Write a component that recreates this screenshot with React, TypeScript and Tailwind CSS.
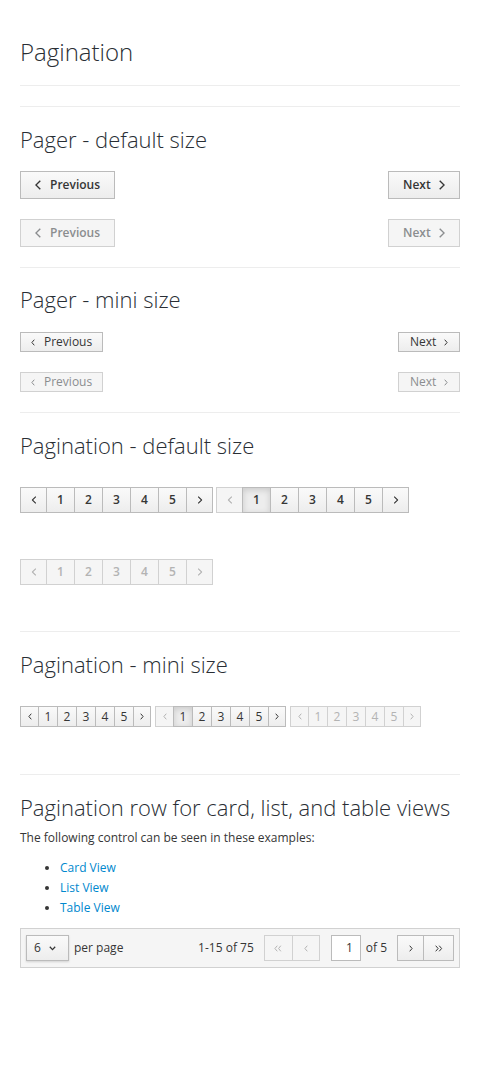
import React from 'react';

const font = { fontFamily: '"Open Sans", "Liberation Sans", sans-serif' };

function Angle({ dir, size = 'md', double = false }: { dir: 'left' | 'right' | 'down'; size?: 'sm' | 'md'; double?: boolean }) {
  const w = size === 'md' ? 6 : 4;
  const h = size === 'md' ? 10 : 7;
  if (dir === 'down') {
    return (
      <svg width="7" height="5" viewBox="0 0 7 5" fill="none" stroke="currentColor" strokeWidth="1.3">
        <path d="M0.8 0.8 L3.5 3.6 L6.2 0.8" />
      </svg>
    );
  }
  const d = dir === 'left' ? `M${w - 0.7} 0.7 L0.9 ${h / 2} L${w - 0.7} ${h - 0.7}` : `M0.7 0.7 L${w - 0.9} ${h / 2} L0.7 ${h - 0.7}`;
  if (double) {
    const d2 = dir === 'left' ? `M${w + 2.8} 0.7 L4.6 ${h / 2} L${w + 2.8} ${h - 0.7}` : `M4.2 0.7 L${w + 2.6} ${h / 2} L4.2 ${h - 0.7}`;
    return (
      <svg width={w + 4} height={h} viewBox={`0 0 ${w + 4} ${h}`} fill="none" stroke="currentColor" strokeWidth="1">
        <path d={d} />
        <path d={d2} />
      </svg>
    );
  }
  return (
    <svg width={w} height={h} viewBox={`0 0 ${w} ${h}`} fill="none" stroke="currentColor" strokeWidth={size === 'md' ? 1.4 : 1}>
      <path d={d} />
    </svg>
  );
}

const btn = 'bg-gradient-to-b from-[#fafafa] to-[#ededed] border border-[#bbb] text-[#363636]';
const btnOff = 'bg-[#f5f5f5] border border-[#d1d1d1] text-[#8b8d8f]';

function Pager({ mini, disabled }: { mini?: boolean; disabled?: boolean }) {
  const tone = disabled ? btnOff : btn;
  if (mini) {
    return (
      <div className="flex justify-between">
        <div className={`${tone} h-[20px] w-[83px] flex items-center pl-[10px] text-[12px] leading-none`}>
          <Angle dir="left" size="sm" />
          <span className="ml-[9px]">Previous</span>
        </div>
        <div className={`${tone} h-[20px] w-[62px] flex items-center pl-[11px] text-[12px] leading-none`}>
          <span>Next</span>
          <span className="ml-[8px]">
            <Angle dir="right" size="sm" />
          </span>
        </div>
      </div>
    );
  }
  return (
    <div className="flex justify-between">
      <div className={`${tone} h-[28px] w-[95px] flex items-center pl-[14px] text-[12px] font-semibold leading-none`}>
        <Angle dir="left" />
        <span className="ml-[9px]">Previous</span>
      </div>
      <div className={`${tone} h-[28px] w-[72px] flex items-center pl-[14px] text-[12px] font-semibold leading-none`}>
        <span>Next</span>
        <span className="ml-[8px]">
          <Angle dir="right" />
        </span>
      </div>
    </div>
  );
}

function Pagination({ mini, disabled, active }: { mini?: boolean; disabled?: boolean; active?: boolean }) {
  const cells = ['<', '1', '2', '3', '4', '5', '>'];
  const h = mini ? 'h-[21px]' : 'h-[26px]';
  const wFirst = mini ? 'w-[19px]' : 'w-[27px]';
  const wLast = mini ? 'w-[18px]' : 'w-[27px]';
  const wNum = mini ? 'w-[20px]' : 'w-[29px]';
  const sz = mini ? 'sm' : 'md';
  return (
    <div className={`inline-flex ${mini ? 'text-[12px]' : 'text-[12px] font-semibold'}`}>
      {cells.map((c, i) => {
        const isActive = active && c === '1';
        const off = disabled || (active && c === '<');
        let tone = off ? btnOff : btn;
        if (isActive) tone = 'bg-[#ededed] border border-[#bbb] text-[#363636] shadow-[inset_0_2px_6px_rgba(3,3,3,0.15)]';
        const w = c === '<' ? wFirst : c === '>' ? wLast : wNum;
        return (
          <div
            key={i}
            className={`${tone} ${h} ${w} ${i > 0 ? '-ml-px' : ''} ${off ? 'text-[#b3b3b3]' : ''} flex items-center justify-center leading-none`}
          >
            {c === '<' ? (
              <span className={mini ? '' : 'scale-[0.8] flex'}>
                <Angle dir="left" size={sz} />
              </span>
            ) : c === '>' ? (
              <span className={mini ? '' : 'scale-[0.8] flex'}>
                <Angle dir="right" size={sz} />
              </span>
            ) : (
              c
            )}
          </div>
        );
      })}
    </div>
  );
}

function Heading({ children, className = '' }: { children: React.ReactNode; className?: string }) {
  return <h2 className={`text-[22px] font-light leading-[32px] text-[#292e34] ${className}`}>{children}</h2>;
}

function Rule({ className = '' }: { className?: string }) {
  return <div className={`border-t border-[#ededed] ${className}`} />;
}

export default function App() {
  return (
    <div className="bg-white min-h-[1068px] px-[20px] text-[#363636]" style={font}>
      <h1 className="pt-[36px] text-[24px] font-light leading-[32px] text-[#292e34]">Pagination</h1>
      <Rule className="mt-[17px]" />
      <Rule className="mt-[20px]" />

      <Heading className="mt-[16px]">Pager - default size</Heading>
      <div className="mt-[16px]">
        <Pager />
      </div>
      <div className="mt-[20px]">
        <Pager disabled />
      </div>
      <Rule className="mt-[20px]" />

      <Heading className="mt-[15px]">Pager - mini size</Heading>
      <div className="mt-[17px]">
        <Pager mini />
      </div>
      <div className="mt-[20px]">
        <Pager mini disabled />
      </div>
      <Rule className="mt-[20px]" />

      <Heading className="mt-[16px]">Pagination - default size</Heading>
      <div className="mt-[26px] flex gap-[3px]">
        <Pagination />
        <Pagination active />
      </div>
      <div className="mt-[46px] flex">
        <Pagination disabled />
      </div>
      <Rule className="mt-[46px]" />

      <Heading className="mt-[16px]">Pagination - mini size</Heading>
      <div className="mt-[26px] flex gap-[4px]">
        <Pagination mini />
        <Pagination mini active />
        <Pagination mini disabled />
      </div>
      <Rule className="mt-[47px]" />

      <Heading className="mt-[16px]">Pagination row for card, list, and table views</Heading>
      <p className="mt-[5px] text-[12px] leading-[20px]">The following control can be seen in these examples:</p>
      <ul className="mt-[10px] pl-[40px] list-disc text-[12px] leading-[20px]">
        <li>
          <a className="text-[#0088ce]">Card View</a>
        </li>
        <li>
          <a className="text-[#0088ce]">List View</a>
        </li>
        <li>
          <a className="text-[#0088ce]">Table View</a>
        </li>
      </ul>

      <div className="mt-[10px] h-[40px] bg-[#f5f5f5] border border-[#d1d1d1] flex items-center justify-between px-[5px] text-[12px]">
        <div className="flex items-center">
          <div className={`${btn} h-[26px] w-[43px] flex items-center pl-[7px] shadow-[0_1px_2px_rgba(3,3,3,0.15)]`}>
            <span>6</span>
            <span className="ml-[8px] flex">
              <Angle dir="down" />
            </span>
          </div>
          <span className="ml-[5px]">per page</span>
        </div>
        <div className="flex items-center">
          <span>1-15 of 75</span>
          <div className="ml-[10px] flex">
            <div className={`${btnOff} text-[#b3b3b3] h-[26px] w-[29px] flex items-center justify-center`}>
              <Angle dir="left" size="sm" double />
            </div>
            <div className={`${btnOff} text-[#b3b3b3] -ml-px h-[26px] w-[28px] flex items-center justify-center`}>
              <Angle dir="left" size="sm" />
            </div>
          </div>
          <div className="ml-[11px] h-[26px] w-[30px] bg-white border border-[#bbb] flex items-center justify-end pr-[7px]">1</div>
          <span className="ml-[5px]">of 5</span>
          <div className="ml-[10px] flex">
            <div className={`${btn} h-[26px] w-[27px] flex items-center justify-center`}>
              <Angle dir="right" size="sm" />
            </div>
            <div className={`${btn} -ml-px h-[26px] w-[31px] flex items-center justify-center`}>
              <Angle dir="right" size="sm" double />
            </div>
          </div>
        </div>
      </div>
    </div>
  );
}
